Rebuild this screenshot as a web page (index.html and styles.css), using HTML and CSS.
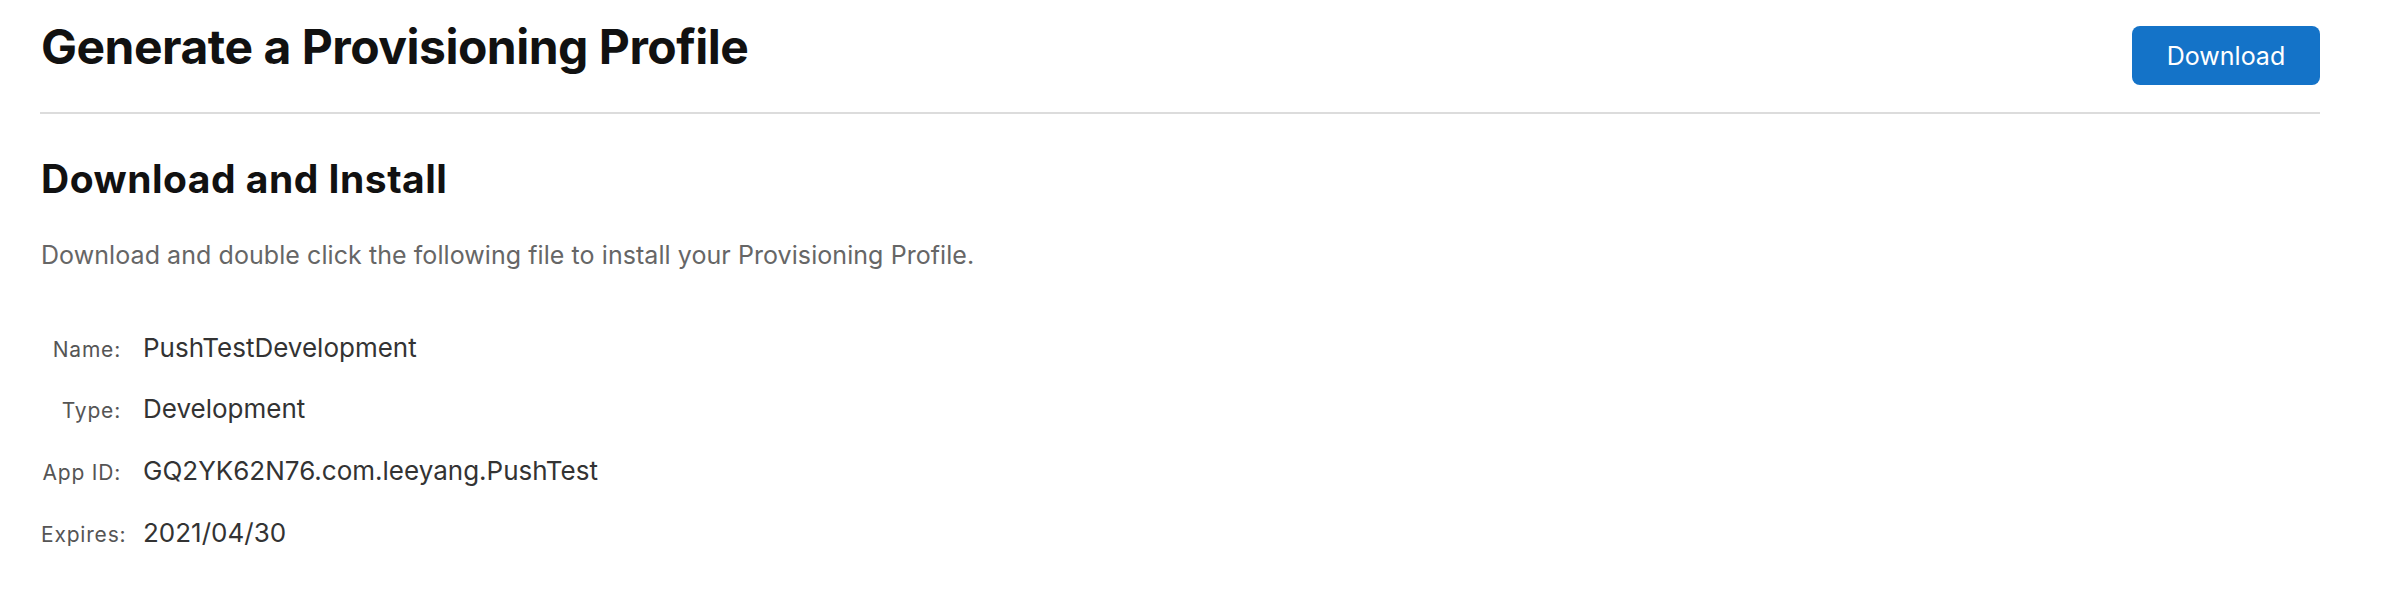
FILE: index.html
```html
<!DOCTYPE html>
<html lang="en">
<head>
<meta charset="utf-8">
<title>Generate a Provisioning Profile</title>
<link rel="stylesheet" href="styles.css">
</head>
<body>
<main class="page">
  <header class="page-header">
    <h1 class="page-title">Generate a Provisioning Profile</h1>
    <button class="btn-primary" type="button">Download</button>
  </header>
  <hr class="divider">
  <section class="section">
    <h2 class="section-title">Download and Install</h2>
    <p class="section-text">Download and double click the following file to install your Provisioning Profile.</p>
    <dl class="details">
      <dt class="details-label">Name:</dt>
      <dd class="details-value">PushTestDevelopment</dd>
      <dt class="details-label">Type:</dt>
      <dd class="details-value">Development</dd>
      <dt class="details-label">App ID:</dt>
      <dd class="details-value">GQ2YK62N76.com.leeyang.PushTest</dd>
      <dt class="details-label">Expires:</dt>
      <dd class="details-value">2021/04/30</dd>
    </dl>
  </section>
</main>
</body>
</html>
```

FILE: styles.css
```css
html, body {
  margin: 0;
  padding: 0;
  background: #ffffff;
}

body {
  font-family: Inter, "Noto Sans", "Liberation Sans", sans-serif;
  color: #333333;
}

.page {
  width: 2279px;
  padding-left: 41px;
}

.page-header {
  box-sizing: border-box;
  height: 112px;
  display: flex;
  justify-content: space-between;
  align-items: flex-start;
  padding-top: 17px;
}

.page-title {
  margin: 0;
  font-size: 48px;
  line-height: 60px;
  font-weight: 700;
  letter-spacing: -0.5px;
  color: #111111;
}

.btn-primary {
  margin-top: 9px;
  width: 188px;
  height: 59px;
  border: 0;
  border-radius: 8px;
  background: #1473c8;
  color: #ffffff;
  font-family: inherit;
  font-size: 25px;
  font-weight: 400;
  padding: 0;
  cursor: pointer;
}

.divider {
  margin: 0 0 0 -1px;
  height: 0;
  border: 0;
  border-top: 2px solid #dcdcdc;
}

.section-title {
  margin: 42px 0 0;
  font-size: 39px;
  line-height: 46px;
  font-weight: 700;
  letter-spacing: 0.5px;
  color: #111111;
}

.section-text {
  margin: 38px 0 0;
  font-size: 25px;
  line-height: 30px;
  letter-spacing: 0.07px;
  color: #666666;
}

.details {
  display: grid;
  grid-template-columns: 80px auto;
  grid-auto-rows: 61.7px;
  column-gap: 22px;
  align-items: baseline;
  margin: 46.5px 0 0;
}

.details-label {
  margin: 0;
  text-align: right;
  font-size: 21px;
  line-height: 62px;
  letter-spacing: 0.8px;
  color: #555555;
}

.details-value {
  margin: 0;
  font-size: 26px;
  line-height: 62px;
  color: #333333;
}
```
